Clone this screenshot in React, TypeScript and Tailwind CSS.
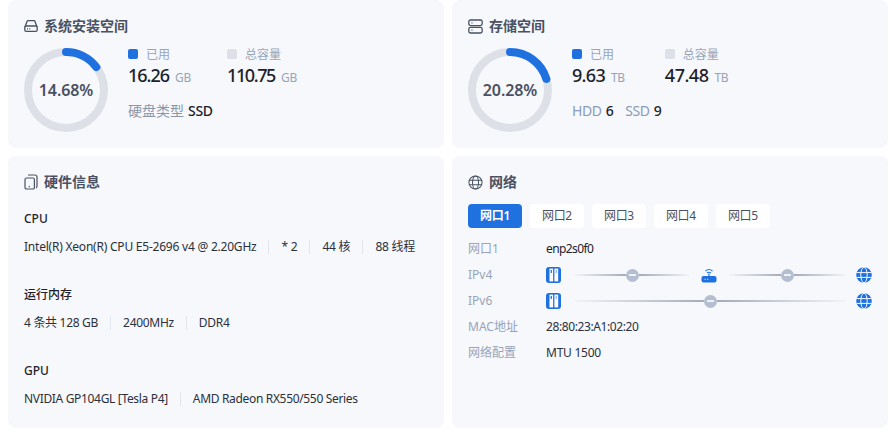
import React from "react";

const FONT = "font-['Noto_Sans','Noto_Sans_CJK_SC',sans-serif]";

// Ring showing used percent
function Ring({ percent, label }: { percent: number; label: string }) {
  const r = 38;
  const c = 2 * Math.PI * r;
  return (
    <div className="relative h-[84px] w-[84px] shrink-0">
      <svg viewBox="0 0 84 84" className="h-[84px] w-[84px] -rotate-90">
        <circle cx="42" cy="42" r={r} fill="none" stroke="#dee0e7" strokeWidth="8" />
        <circle
          cx="42"
          cy="42"
          r={r}
          fill="none"
          stroke="#1f71e0"
          strokeWidth="8"
          strokeLinecap="round"
          strokeDasharray={`${(c * percent) / 100} ${c}`}
        />
      </svg>
      <div className="absolute inset-0 flex items-center justify-center text-[16px] font-semibold tracking-[-0.1px] text-[#4a5162]">
        {label}
      </div>
    </div>
  );
}

function Stat({
  color,
  label,
  value,
  unit,
  tracking = "tracking-[-1px]",
}: {
  color: string;
  label: string;
  value: string;
  unit: string;
  tracking?: string;
}) {
  return (
    <div>
      <div className="flex h-[18px] items-center">
        <span className={"h-[10px] w-[10px] rounded-[2px] " + color} />
        <span className="ml-2 pt-[2px] text-[12px] leading-[14px] text-[#98a4b8]">{label}</span>
      </div>
      <div className="mt-[2px] flex h-[20px] items-baseline">
        <span className={"text-[18px] font-medium leading-[20px] text-[#1d2129] " + tracking}>{value}</span>
        <span className="ml-1.5 text-[12px] leading-[20px] tracking-[-0.3px] text-[#98a4b8]">{unit}</span>
      </div>
    </div>
  );
}

function Title({ icon, children }: { icon: React.ReactNode; children: React.ReactNode }) {
  return (
    <div className="flex h-5 items-center gap-1.5 text-[14px] font-semibold text-[#4a5162]">
      {icon}
      {children}
    </div>
  );
}

function DiskIcon() {
  return (
    <svg viewBox="0 0 14 14" className="h-3.5 w-3.5 translate-y-px" fill="none" stroke="#4a5162" strokeWidth="1.3">
      <path d="M1 8 L3 2.5 Q3.3 1.7 4 1.7 H10 Q10.7 1.7 11 2.5 L13 8" />
      <rect x="0.8" y="7" width="12.4" height="5.4" rx="1.4" />
      <path d="M3 9.8 H4 M5.2 9.8 H6.2" />
    </svg>
  );
}

function ServerIcon() {
  return (
    <svg viewBox="0 0 15 15" className="h-[15px] w-[15px] translate-y-px" fill="none" stroke="#4a5162" strokeWidth="1.3">
      <rect x="0.8" y="1" width="13.4" height="5.6" rx="1.8" />
      <rect x="0.8" y="8.4" width="13.4" height="5.6" rx="1.8" />
      <path d="M3 3.8 H5 M3 11.2 H5" stroke="#98a4b8" />
    </svg>
  );
}

function ChipIcon() {
  return (
    <svg viewBox="0 0 14 16" className="h-4 w-3.5 translate-y-px" fill="none" stroke="#4a5162" strokeWidth="1.2">
      <path d="M4 1 H11 Q13 1 13 3 V12 Q13 13.5 12 14" />
      <rect x="1" y="4" width="9.4" height="11" rx="1.6" />
      <path d="M4.6 12.6 H5.8" />
    </svg>
  );
}

function OutlineGlobe() {
  return (
    <svg viewBox="0 0 16 16" className="h-[15px] w-[15px] translate-y-px" fill="none" stroke="#4a5162" strokeWidth="1.1">
      <circle cx="8" cy="8" r="7" />
      <ellipse cx="8" cy="8" rx="3.2" ry="7" />
      <path d="M1 5.6 H15 M1 10.4 H15" />
    </svg>
  );
}

function SolidGlobe() {
  return (
    <svg viewBox="0 0 16 16" className="h-4 w-4 shrink-0">
      <circle cx="8" cy="8" r="7.8" fill="#1f71e0" />
      <ellipse cx="8" cy="8" rx="3.2" ry="7.8" fill="none" stroke="#f6f8fd" strokeWidth="1" />
      <path d="M0.5 5.6 H15.5 M0.5 10.4 H15.5" stroke="#f6f8fd" strokeWidth="1" />
    </svg>
  );
}

function SwitchIcon() {
  return (
    <svg viewBox="0 0 15 16" className="h-4 w-[15px] shrink-0">
      <rect x="0" y="0" width="15" height="16" rx="3" fill="#1f71e0" />
      <rect x="3.5" y="1.6" width="3.6" height="12.8" fill="#fff" />
      <rect x="8.4" y="1.6" width="3.8" height="12.8" fill="#fff" />
      <rect x="4.6" y="3" width="1.3" height="3" fill="#1f71e0" />
      <rect x="9.6" y="3" width="1.3" height="3" fill="#8fb8ef" />
    </svg>
  );
}

function RouterIcon() {
  return (
    <svg viewBox="0 0 16 15" className="h-[15px] w-4 shrink-0">
      <path d="M4.5 3 Q8 0 11.5 3 M6 5 Q8 3.4 10 5" fill="none" stroke="#1f71e0" strokeWidth="1.1" />
      <rect x="7.4" y="5.5" width="1.2" height="3" fill="#1f71e0" />
      <rect x="0.5" y="8" width="15" height="6.6" rx="2" fill="#1f71e0" />
      <path d="M3.5 11.3 H4.7 M6 11.3 H7.2" stroke="#d5e4fa" strokeWidth="1" />
    </svg>
  );
}

// Round gray dot with a minus, sitting on a link
function Node() {
  return (
    <span className="flex h-[13px] w-[13px] shrink-0 items-center justify-center rounded-full bg-[#b3bfd0]">
      <span className="h-[2px] w-[7px] bg-[#eef1f6]" />
    </span>
  );
}

function Link({ width }: { width: string }) {
  return (
    <div className={"flex items-center " + width}>
      <span className="h-[2px] flex-1 bg-gradient-to-r from-[#f1f3f8] to-[#a5abbb]" />
      <Node />
      <span className="h-[2px] flex-1 bg-gradient-to-r from-[#a5abbb] to-[#f1f3f8]" />
    </div>
  );
}

function Row({ label, children }: { label: string; children: React.ReactNode }) {
  return (
    <div className="flex h-[26px] items-center text-[12px]">
      <span className="w-[78px] shrink-0 text-[#98a4b8]">{label}</span>
      {children}
    </div>
  );
}

function InfoGroup({ title, items, tracking }: { title: string; items: string[]; tracking: string }) {
  return (
    <div className="h-[76px]">
      <div className="flex h-5 items-center text-[12px] font-medium text-[#1d2129]">{title}</div>
      <div className={"mt-2 flex h-5 items-center text-[12px] text-[#2b303b] " + tracking}>
        {items.map((item, i) => (
          <React.Fragment key={item}>
            {i > 0 && <span className="mx-3 h-[14px] w-px bg-[#e3e6ec]" />}
            <span>{item}</span>
          </React.Fragment>
        ))}
      </div>
    </div>
  );
}

export default function App() {
  const tabs = ["网口1", "网口2", "网口3", "网口4", "网口5"];
  return (
    <div className={"grid h-[444px] grid-cols-2 grid-rows-[148px_272px] gap-2 bg-white pl-2 pr-[7px] " + FONT}>
      {/* System disk */}
      <section className="rounded-lg bg-[#f6f8fc] px-4 pt-[15px]">
        <Title icon={<DiskIcon />}>系统安装空间</Title>
        <div className="mt-[13px] flex gap-5">
          <Ring percent={14.68} label="14.68%" />
          <div className="-mt-[3px]">
            <div className="flex gap-[36px]">
              <Stat color="bg-[#1f71e0]" label="已用" value="16.26" unit="GB" />
              <Stat color="bg-[#dee0e7]" label="总容量" value="110.75" unit="GB" tracking="tracking-[-1.4px]" />
            </div>
            <div className="mt-[15px] flex h-5 items-center gap-1 text-[14px]">
              <span className="text-[#8a96aa]">硬盘类型</span>
              <span className="font-medium tracking-[-0.3px] text-[#1d2129]">SSD</span>
            </div>
          </div>
        </div>
      </section>

      {/* Storage */}
      <section className="rounded-lg bg-[#f6f8fc] px-4 pt-[15px]">
        <Title icon={<ServerIcon />}>存储空间</Title>
        <div className="mt-[13px] flex gap-5">
          <Ring percent={20.28} label="20.28%" />
          <div className="-mt-[3px]">
            <div className="flex gap-10">
              <Stat color="bg-[#1f71e0]" label="已用" value="9.63" unit="TB" tracking="tracking-[-0.7px]" />
              <Stat color="bg-[#dee0e7]" label="总容量" value="47.48" unit="TB" tracking="tracking-[-0.5px]" />
            </div>
            <div className="mt-[15px] flex h-5 items-center text-[14px] tracking-[-0.4px]">
              <span className="text-[#8a9bb5]">HDD</span>
              <span className="ml-1 font-medium text-[#1d2129]">6</span>
              <span className="ml-3 text-[#8a9bb5]">SSD</span>
              <span className="ml-1 font-medium text-[#1d2129]">9</span>
            </div>
          </div>
        </div>
      </section>

      {/* Hardware */}
      <section className="rounded-lg bg-[#f6f8fc] px-4 pt-[15px]">
        <Title icon={<ChipIcon />}>硬件信息</Title>
        <div className="mt-[18px]">
          <InfoGroup
            title="CPU"
            items={["Intel(R) Xeon(R) CPU E5-2696 v4 @ 2.20GHz", "* 2", "44 核", "88 线程"]}
            tracking="tracking-[-0.22px]"
          />
          <InfoGroup title="运行内存" items={["4 条共 128 GB", "2400MHz", "DDR4"]} tracking="tracking-[-0.3px]" />
          <InfoGroup
            title="GPU"
            items={["NVIDIA GP104GL [Tesla P4]", "AMD Radeon RX550/550 Series"]}
            tracking="tracking-[-0.33px]"
          />
        </div>
      </section>

      {/* Network */}
      <section className="rounded-lg bg-[#f6f8fc] px-4 pt-[15px]">
        <Title icon={<OutlineGlobe />}>网络</Title>
        <div className="mt-[13px] flex gap-2">
          {tabs.map((tab, i) => (
            <button
              key={tab}
              className={
                "h-6 rounded px-3 text-[12px] tracking-[-0.3px] " +
                (i === 0 ? "bg-[#1f71e0] font-semibold text-white" : "bg-white text-[#4a5162]")
              }
            >
              {tab}
            </button>
          ))}
        </div>
        <div className="mt-2">
          <Row label="网口1">
            <span className="tracking-[-0.6px] text-[#1d2129]">enp2s0f0</span>
          </Row>
          <Row label="IPv4">
            <SwitchIcon />
            <Link width="w-[115px] ml-[14px]" />
            <span className="mx-3">
              <RouterIcon />
            </span>
            <Link width="w-[117px]" />
            <span className="ml-[11px]">
              <SolidGlobe />
            </span>
          </Row>
          <Row label="IPv6">
            <SwitchIcon />
            <Link width="w-[270px] ml-[14px]" />
            <span className="ml-[11px]">
              <SolidGlobe />
            </span>
          </Row>
          <Row label="MAC地址">
            <span className="tracking-[-0.4px] text-[#2b303b]">28:80:23:A1:02:20</span>
          </Row>
          <Row label="网络配置">
            <span className="tracking-[-0.25px] text-[#2b303b]">MTU 1500</span>
          </Row>
        </div>
      </section>
    </div>
  );
}
